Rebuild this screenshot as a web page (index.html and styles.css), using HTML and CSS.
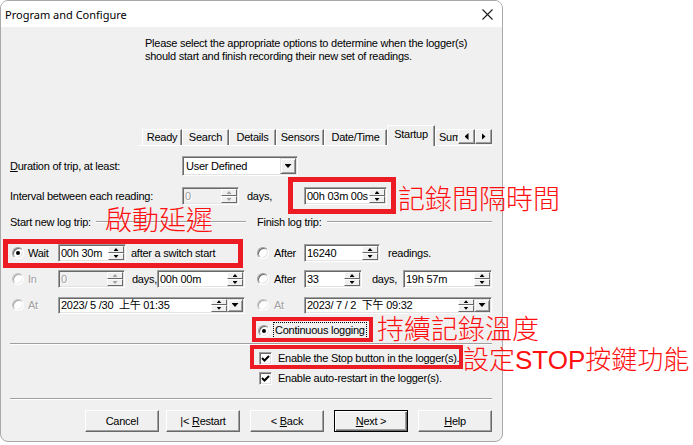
FILE: index.html
```html
<!DOCTYPE html>
<html>
<head>
<meta charset="utf-8">
<title>Program and Configure</title>
<link rel="stylesheet" href="styles.css">
</head>
<body>
<div class="dialog">
  <div class="titlebar">
    <span class="title">Program and Configure</span>
    <svg class="close" width="11" height="11" viewBox="0 0 11 11"><path d="M0.5 0.5 L10.5 10.5 M10.5 0.5 L0.5 10.5" stroke="#1b1b1b" stroke-width="1.1" fill="none"/></svg>
  </div>

  <div class="header">
    <p class="intro">Please select the appropriate options to determine when the logger(s)<br>should start and finish recording their new set of readings.</p>
  </div>

  <div class="tabs">
    <span class="tab t-ready">Ready</span>
    <span class="tab t-search">Search</span>
    <span class="tab t-details">Details</span>
    <span class="tab t-sensors">Sensors</span>
    <span class="tab t-date">Date/Time</span>
    <span class="tab sel t-startup">Startup</span>
    <span class="tab t-sum">Summary</span>
    <span class="arrow-btn"><i class="tri left"></i></span>
    <span class="arrow-btn"><i class="tri right"></i></span>
  </div>

  <div class="form">
    <div class="row">
      <span class="lbl-main"><u>D</u>uration of trip, at least:</span>
      <div class="field combo w-combo"><span class="val">User Defined</span><span class="dd"><i class="tri down"></i></span></div>
    </div>
    <div class="row r-int">
      <span class="lbl-main">Interval between each reading:</span>
      <div class="field dis w-int1"><span class="val">0</span><span class="spin"><i class="up"></i><i class="dn"></i></span></div>
      <span class="days-int">days,</span>
      <div class="field w-int2"><span class="val">00h 03m 00s</span><span class="spin"><i class="up"></i><i class="dn"></i></span></div>
    </div>

    <div class="grouphead">
      <div class="gh gh-left"><span>Start new log trip:</span><span class="line"></span></div>
      <div class="gh gh-right"><span>Finish log trip:</span><span class="line"></span></div>
    </div>

    <div class="grid">
      <div class="col col-left">
        <div class="row">
          <span class="radio on"></span><span class="opt">Wait</span>
          <div class="field w-wait"><span class="val">00h 30m</span><span class="spin"><i class="up"></i><i class="dn"></i></span></div>
          <span class="after-txt">after a switch start</span>
        </div>
        <div class="row">
          <span class="radio dis"></span><span class="opt dis">In</span>
          <div class="field dis w-in1"><span class="val">0</span><span class="spin"><i class="up"></i><i class="dn"></i></span></div>
          <span class="days-in">days,</span>
          <div class="field w-in2"><span class="val">00h 00m</span><span class="spin"><i class="up"></i><i class="dn"></i></span></div>
        </div>
        <div class="row">
          <span class="radio dis"></span><span class="opt dis">At</span>
          <div class="field date w-at1"><span class="val">2023/ 5 /30  上午 01:35</span><span class="spin"><i class="up"></i><i class="dn"></i></span><span class="dd"><i class="tri down"></i></span></div>
        </div>
      </div>

      <div class="col col-right">
        <div class="row">
          <span class="radio"></span><span class="opt">After</span>
          <div class="field w-r1"><span class="val">16240</span><span class="spin"><i class="up"></i><i class="dn"></i></span></div>
          <span class="readings">readings.</span>
        </div>
        <div class="row">
          <span class="radio"></span><span class="opt">After</span>
          <div class="field w-r2"><span class="val">33</span><span class="spin"><i class="up"></i><i class="dn"></i></span></div>
          <span class="days-r">days,</span>
          <div class="field w-r3"><span class="val">19h 57m</span><span class="spin"><i class="up"></i><i class="dn"></i></span></div>
        </div>
        <div class="row">
          <span class="radio dis"></span><span class="opt dis">At</span>
          <div class="field date w-at2"><span class="val">2023/ 7 / 2  下午 09:32</span><span class="spin"><i class="up"></i><i class="dn"></i></span><span class="dd"><i class="tri down"></i></span></div>
        </div>
        <div class="row row-last">
          <span class="radio on radio-cont"></span><span class="focus">Continuous logging</span>
        </div>
      </div>
    </div>
  </div>

  <div class="sep"></div>

  <div class="checks">
    <div class="crow"><span class="check"><svg width="9" height="9" viewBox="0 0 9 9"><path d="M1 4 L3.5 6.5 L8 2" stroke="#000" stroke-width="2" fill="none"/></svg></span><span class="ctext">Enable the Stop button in the logger(s).</span></div>
    <div class="crow"><span class="check"><svg width="9" height="9" viewBox="0 0 9 9"><path d="M1 4 L3.5 6.5 L8 2" stroke="#000" stroke-width="2" fill="none"/></svg></span><span class="ctext">Enable auto-restart in the logger(s).</span></div>
  </div>

  <div class="sep sep2"></div>

  <div class="buttons">
    <span class="btn">Cancel</span>
    <span class="btn btn-restart">|&lt; <u>R</u>estart</span>
    <span class="btn">&lt; <u>B</u>ack</span>
    <span class="btn default"><u>N</u>ext &gt;</span>
    <span class="btn"><u>H</u>elp</span>
  </div>
</div>

<div class="notes">
  <span class="box b1"></span>
  <span class="box b2"></span>
  <span class="box b3"></span>
  <span class="box b4"></span>
  <span class="note n1">記錄間隔時間</span>
  <span class="note n2">啟動延遲</span>
  <span class="note n3">持續記錄溫度</span>
  <span class="note n4">設定<span class="latin">STOP</span>按鍵功能</span>
</div>
</body>
</html>
```

FILE: styles.css
```css
* { box-sizing: border-box; }
html, body { margin: 0; padding: 0; }
body {
  width: 693px;
  height: 445px;
  overflow: hidden;
  position: relative;
  background: #fff;
  color: #000;
  font-family: "Liberation Sans", Arial, "Noto Sans CJK TC", sans-serif;
  font-size: 11px;
  letter-spacing: -0.25px;
}

.dialog {
  width: 503px;
  height: 442px;
  border: 1px solid #a9a9a9;
  border-radius: 8px;
  background: #f0f0f0;
  overflow: hidden;
}

.titlebar {
  height: 26px;
  background: #fff;
  display: flex;
  align-items: center;
  justify-content: space-between;
  padding: 0 9px 0 4px;
}
.title {
  font-family: "Noto Sans", "Open Sans", sans-serif;
  font-size: 11px;
  letter-spacing: 0;
}
.close { display: block; }

.header {
  height: 98px;
  padding: 10px 0 0 144px;
}
.intro { margin: 0; line-height: 13px; }

/* tab strip */
.tabs {
  display: flex;
  align-items: flex-end;
  height: 21px;
  width: 355px;
  margin-left: 137px;
  padding-left: 4px;
  background: linear-gradient(#fff, #fff) left bottom / 100% 1px no-repeat;
}
.tab {
  flex: none;
  height: 16px;
  margin-bottom: 1px;
  border-top: 1px solid #fff;
  border-left: 1px solid #fff;
  border-right: 1px solid #696969;
  box-shadow: inset -1px 0 #a0a0a0;
  text-align: center;
  line-height: 14px;
  white-space: nowrap;
  overflow: hidden;
}
.t-ready { width: 40px; }
.t-search { width: 47px; }
.t-details { width: 47px; }
.t-sensors { width: 48px; }
.t-date { width: 63px; }
.t-startup { width: 48px; }
.t-sum {
  width: 23px;
  text-align: left;
  padding-left: 3px;
  border-right: none;
  box-shadow: none;
}
.tab.sel {
  height: 21px;
  margin-bottom: 0;
  line-height: 16px;
  background: #f0f0f0;
}
.arrow-btn {
  flex: none;
  width: 17px;
  height: 15px;
  margin-bottom: 2px;
  background: #f0f0f0;
  border: 1px solid;
  border-color: #fff #696969 #696969 #fff;
  box-shadow: inset -1px -1px #a0a0a0;
  display: flex;
  align-items: center;
  justify-content: center;
}
.tri { display: block; background: #000; }
.tri.left { width: 4px; height: 7px; clip-path: polygon(100% 0, 100% 100%, 0 50%); }
.tri.right { width: 4px; height: 7px; clip-path: polygon(0 0, 100% 50%, 0 100%); }
.tri.down { width: 7px; height: 4px; clip-path: polygon(0 0, 100% 0, 50% 100%); }

/* form */
.form { padding: 7px 0 0 9px; }
.row {
  display: flex;
  align-items: center;
  height: 26px;
  white-space: nowrap;
}
.r-int { margin-top: 4px; }
.lbl-main { flex: none; width: 172px; }

.field {
  flex: none;
  display: flex;
  height: 18px;
  background: #fff;
  border: 1px solid;
  border-color: #a0a0a0 #fff #fff #a0a0a0;
  padding: 1px;
  box-shadow: inset 1px 1px #696969, inset -1px -1px #e3e3e3;
}
.field.combo { height: 20px; }
.field.date { height: 17px; }
.val {
  flex: 1;
  min-width: 0;
  padding-left: 1px;
  line-height: 14px;
  white-space: pre;
  overflow: hidden;
}
.combo .val { line-height: 16px; padding-left: 2px; }
.date .val { line-height: 13px; }
.field.dis { background: #f0f0f0; }
.field.dis .val { color: #a0a0a0; }

.spin {
  flex: none;
  width: 16px;
  display: flex;
  flex-direction: column;
}
.spin i {
  flex: 1;
  display: flex;
  align-items: center;
  justify-content: center;
  background: #f0f0f0;
  border: 1px solid;
  border-color: #fff #696969 #696969 #fff;
}
.spin i::after {
  content: "";
  width: 5px;
  height: 3px;
  background: #000;
}
.spin .up::after { clip-path: polygon(50% 0, 100% 100%, 0 100%); }
.spin .dn::after { clip-path: polygon(0 0, 100% 0, 50% 100%); }
.field.dis .spin i::after { background: #a0a0a0; }

.dd {
  flex: none;
  width: 16px;
  display: flex;
  align-items: center;
  justify-content: center;
  background: #f0f0f0;
  border: 1px solid;
  border-color: #e3e3e3 #696969 #696969 #e3e3e3;
  box-shadow: inset 1px 1px #fff, inset -1px -1px #a0a0a0;
}

.w-combo { width: 116px; }
.w-int1 { width: 57px; }
.w-int2 { width: 83px; }
.days-int { flex: none; width: 65px; padding-left: 8px; }

/* group headers */
.grouphead {
  display: grid;
  grid-template-columns: 247px 235px;
  height: 26px;
}
.gh { display: flex; align-items: center; white-space: nowrap; }
.gh .line {
  flex: 1;
  height: 2px;
  border-top: 1px solid #a0a0a0;
  border-bottom: 1px solid #fff;
}
.gh-left .line { margin: 0 11px 0 5px; }
.gh-right .line { margin-left: 6px; }

.grid {
  display: grid;
  grid-template-columns: 247px 235px;
  margin-top: 5px;
}
.col { display: flex; flex-direction: column; }
.col-left { padding-left: 2px; }
.row-last { height: 25px; }

.radio {
  flex: none;
  width: 12px;
  height: 12px;
  border-radius: 50%;
  background: #fff;
  border: 1px solid;
  border-color: #a0a0a0 #fff #fff #a0a0a0;
  box-shadow: inset 1px 1px #696969, inset -1px -1px #e3e3e3;
  display: flex;
  align-items: center;
  justify-content: center;
}
.radio.on::after {
  content: "";
  width: 4px;
  height: 4px;
  border-radius: 50%;
  background: #000;
}
.radio.dis {
  border-color: #c4c4c4 #fff #fff #c4c4c4;
  box-shadow: inset 1px 1px #a8a8a8, inset -1px -1px #ececec;
}
.opt { flex: none; width: 30px; margin-left: 4px; }
.col-right .opt { margin-left: 5px; }
.dis { color: #a0a0a0; text-shadow: 1px 1px #fff; }

.w-wait { width: 68px; }
.after-txt { margin-left: 5px; }
.w-in1 { width: 67px; }
.days-in { flex: none; width: 32px; padding-left: 7px; }
.w-in2 { width: 88px; }
.w-at1 { width: 187px; }

.w-r1 { width: 76px; }
.readings { margin-left: 8px; }
.w-r2 { width: 58px; }
.days-r { flex: none; width: 41px; padding-left: 10px; }
.w-r3 { width: 89px; }
.w-at2 { width: 188px; }

.radio-cont { margin-left: 1px; }
.focus {
  margin-left: 3px;
  padding: 0 1px 0 1px;
  height: 17px;
  line-height: 15px;
  border: 1px dotted #000;
}

.sep {
  height: 2px;
  margin: 0 10px 0 9px;
  border-top: 1px solid #a0a0a0;
  border-bottom: 1px solid #fff;
}
.sep2 { margin-top: 10px; }

.checks { padding-left: 257px; margin-top: 3px; }
.crow { display: flex; align-items: center; height: 20px; }
.check {
  flex: none;
  width: 13px;
  height: 13px;
  margin-left: 1px;
  background: #fff;
  border: 1px solid;
  border-color: #a0a0a0 #fff #fff #a0a0a0;
  box-shadow: inset 1px 1px #696969, inset -1px -1px #e3e3e3;
  display: flex;
  align-items: center;
  justify-content: center;
}
.check svg { display: block; }
.ctext { margin-left: 6px; }

.buttons {
  display: flex;
  gap: 10px;
  padding-left: 84px;
  margin-top: 10px;
}
.btn {
  flex: none;
  width: 74px;
  height: 22px;
  background: #f0f0f0;
  border: 1px solid;
  border-color: #fff #696969 #696969 #fff;
  box-shadow: inset -1px -1px #a0a0a0;
  text-align: center;
  line-height: 20px;
}
.btn-restart { margin-left: -3px; }
.btn.default {
  border-color: #000;
  box-shadow: inset 1px 1px #fff, inset -1px -1px #696969, inset -2px -2px #a0a0a0;
}

/* annotations overlay */
.notes { position: absolute; left: 0; top: 0; width: 693px; height: 445px; pointer-events: none; }
.box { position: absolute; border: 5px solid #ed1c24; }
.b1 { left: 288px; top: 177px; width: 108px; height: 37px; }
.b2 { left: 3px; top: 239px; width: 240px; height: 29px; }
.b3 { left: 252px; top: 317px; width: 121px; height: 25px; border-width: 4px; }
.b4 { left: 250px; top: 345px; width: 213px; height: 24px; border-width: 4px; }
.note {
  position: absolute;
  font-family: "Noto Sans CJK TC", "Noto Sans CJK SC", sans-serif;
  font-size: 27px;
  line-height: 27px;
  font-weight: 300;
  letter-spacing: 0;
  color: #ff1010;
  white-space: nowrap;
}
.n1 { left: 398px; top: 184px; }
.n2 { left: 105px; top: 205px; }
.n3 { left: 377px; top: 314px; }
.n4 { left: 463px; top: 345px; font-size: 26px; line-height: 26px; }
.latin { font-family: "Liberation Sans", Arial, sans-serif; font-size: 26px; }
```
